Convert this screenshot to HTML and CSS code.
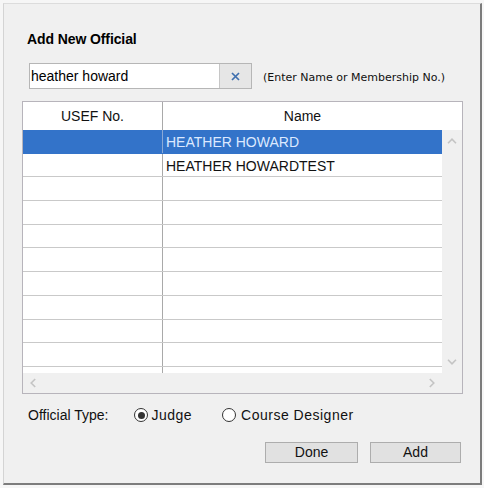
FILE: index.html
```html
<!DOCTYPE html>
<html>
<head>
<meta charset="utf-8">
<link rel="stylesheet" href="styles.css">
</head>
<body>
<div class="dialog">
  <div class="title">Add New Official</div>
  <div class="search-row">
    <div class="search">
      <span class="search-text">heather howard</span>
      <span class="clear"><svg width="9" height="9" viewBox="0 0 9 9"><path d="M1 1L8 8M8 1L1 8" stroke="#3f6fae" stroke-width="1.7" fill="none"/></svg></span>
    </div>
    <span class="hint">(Enter Name or Membership No.)</span>
  </div>
  <div class="table">
    <div class="thead">
      <div class="th c1">USEF No.</div>
      <div class="th c2">Name</div>
      <div class="th-pad"></div>
    </div>
    <div class="tmain">
      <div class="tbody">
        <div class="row selected"><div class="cell c1"></div><div class="cell c2">HEATHER HOWARD</div></div>
        <div class="row"><div class="cell c1"></div><div class="cell c2">HEATHER HOWARDTEST</div></div>
        <div class="row"><div class="cell c1"></div><div class="cell c2"></div></div>
        <div class="row"><div class="cell c1"></div><div class="cell c2"></div></div>
        <div class="row"><div class="cell c1"></div><div class="cell c2"></div></div>
        <div class="row"><div class="cell c1"></div><div class="cell c2"></div></div>
        <div class="row"><div class="cell c1"></div><div class="cell c2"></div></div>
        <div class="row"><div class="cell c1"></div><div class="cell c2"></div></div>
        <div class="row"><div class="cell c1"></div><div class="cell c2"></div></div>
        <div class="row"><div class="cell c1"></div><div class="cell c2"></div></div>
        <div class="row"><div class="cell c1"></div><div class="cell c2"></div></div>
      </div>
      <div class="vscroll">
        <svg width="10" height="6" viewBox="0 0 10 6"><polyline points="1,5.2 5,1.2 9,5.2" fill="none" stroke="#c4c4c4" stroke-width="1.6"/></svg>
        <svg width="10" height="6" viewBox="0 0 10 6"><polyline points="1,0.8 5,4.8 9,0.8" fill="none" stroke="#c4c4c4" stroke-width="1.6"/></svg>
      </div>
    </div>
    <div class="hrow">
      <div class="hscroll">
        <svg width="6" height="10" viewBox="0 0 6 10"><polyline points="5.2,1 1.2,5 5.2,9" fill="none" stroke="#c4c4c4" stroke-width="1.6"/></svg>
        <svg width="6" height="10" viewBox="0 0 6 10"><polyline points="0.8,1 4.8,5 0.8,9" fill="none" stroke="#c4c4c4" stroke-width="1.6"/></svg>
      </div>
      <div class="corner"></div>
    </div>
  </div>
  <div class="type-row">
    <span class="type-label">Official Type:</span>
    <span class="radio checked first"></span><span class="radio-label">Judge</span>
    <span class="radio second"></span><span class="radio-label second-label">Course Designer</span>
  </div>
  <div class="buttons">
    <div class="btn done">Done</div>
    <div class="btn add">Add</div>
  </div>
</div>
</body>
</html>
```

FILE: styles.css
```css
html, body {
  margin: 0;
  padding: 0;
}
body {
  background: #f6f6f6;
  width: 484px;
  height: 488px;
  overflow: hidden;
  font-family: "Liberation Sans", Arial, sans-serif;
  font-size: 14px;
  color: #111;
}
.dialog {
  margin: 3px 0 0 3px;
  width: 476px;
  height: 479px;
  background: #f0f0f0;
  border-left: 1px solid #d4d4d4;
  border-top: 1px solid #dcdcdc;
  border-right: 2px solid #7c7c7c;
  border-bottom: 2px solid #7c7c7c;
  display: flex;
  flex-direction: column;
}
.title {
  margin: 27px 0 0 23px;
  font-weight: bold;
  font-size: 14px;
  line-height: 16px;
  letter-spacing: -0.1px;
  color: #000;
}
.search-row {
  margin: 16px 0 0 25px;
  display: flex;
  align-items: center;
  height: 26px;
}
.search {
  box-sizing: border-box;
  width: 223px;
  height: 26px;
  border: 1px solid #b6b6b6;
  background: #fff;
  display: flex;
}
.search-text {
  flex: 1;
  padding-left: 1px;
  line-height: 24px;
  color: #000;
}
.clear {
  width: 31px;
  background: #e6e6e6;
  border-left: 1px solid #c6c6c6;
  display: flex;
  align-items: center;
  justify-content: center;
}
.hint {
  margin-left: 11px;
  font-family: "DejaVu Sans", Verdana, sans-serif;
  font-size: 11px;
  color: #111;
  padding-top: 2px;
}
.table {
  margin: 12px 0 0 18px;
  width: 439px;
  border: 1px solid #b7b4bb;
  background: #f0f0f0;
}
.thead {
  display: flex;
  height: 28px;
  background: #fff;
}
.th {
  line-height: 28px;
  text-align: center;
  color: #111;
}
.c1 {
  width: 139px;
  border-right: 1px solid #a9a9a9;
}
.c2 {
  width: 279px;
}
.th-pad {
  width: 20px;
}
.tmain {
  display: flex;
  height: 243px;
}
.tbody {
  width: 419px;
  height: 243px;
  overflow: hidden;
  background: #fff;
}
.row {
  display: flex;
  box-sizing: border-box;
  height: 23.7px;
  border-bottom: 1px solid #c9c9c9;
}
.cell {
  padding-top: 2px;
  line-height: 21px;
  white-space: nowrap;
}
.cell.c2 {
  box-sizing: border-box;
  padding-left: 3px;
}
.row.selected {
  background: #3373c9;
  border-bottom-color: #3373c9;
  color: #dce9ff;
}
.row.selected .c1 {
  border-right-color: #8aa9d6;
}
.vscroll {
  width: 20px;
  display: flex;
  flex-direction: column;
  align-items: center;
  justify-content: space-between;
  padding: 8px 0 8px;
  box-sizing: border-box;
}
.hrow {
  display: flex;
  height: 20px;
}
.hscroll {
  width: 419px;
  display: flex;
  align-items: center;
  justify-content: space-between;
  padding: 0 7px 0 7px;
  box-sizing: border-box;
}
.corner {
  width: 20px;
}
.type-row {
  margin: 11px 0 0 24px;
  height: 20px;
  display: flex;
  align-items: center;
  color: #111;
}
.radio {
  box-sizing: border-box;
  width: 14px;
  height: 14px;
  border: 1px solid #333;
  border-radius: 50%;
  background: #fff;
  display: flex;
  align-items: center;
  justify-content: center;
}
.radio.first {
  margin-left: 26px;
}
.radio.second {
  margin-left: 30px;
}
.radio.checked::after {
  content: "";
  width: 7px;
  height: 7px;
  border-radius: 50%;
  background: #333;
}
.radio-label {
  margin-left: 3px;
  letter-spacing: 0.5px;
}
.radio-label.second-label {
  margin-left: 5px;
}
.buttons {
  margin-top: 17px;
  display: flex;
  justify-content: flex-end;
  padding-right: 19px;
  gap: 12px;
}
.btn {
  box-sizing: border-box;
  height: 21px;
  line-height: 19px;
  border: 1px solid #adadad;
  background: #e1e1e1;
  text-align: center;
  color: #111;
}
.btn.done {
  width: 93px;
}
.btn.add {
  width: 91px;
}
```
